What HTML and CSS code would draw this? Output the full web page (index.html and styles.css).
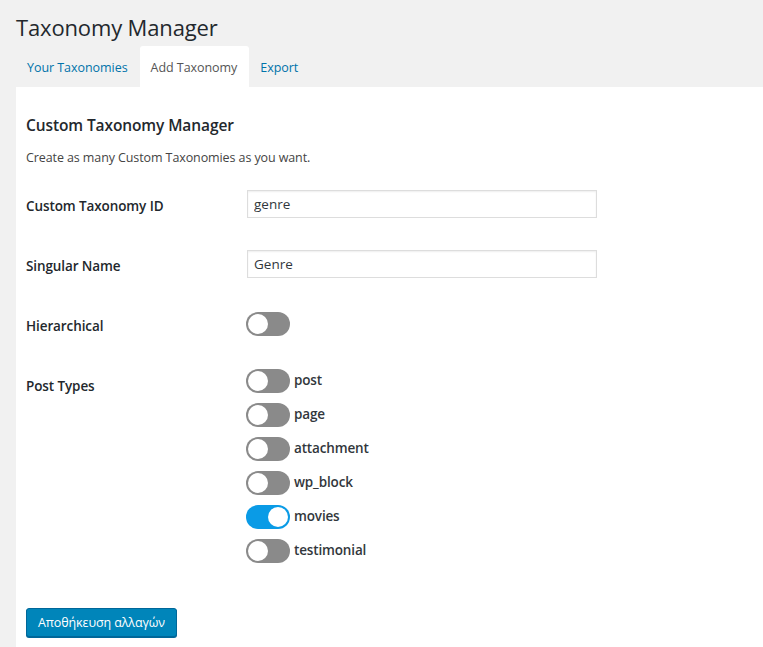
FILE: index.html
```html
<!DOCTYPE html>
<html lang="en">
<head>
<meta charset="utf-8">
<title>Taxonomy Manager</title>
<link rel="stylesheet" href="styles.css">
</head>
<body>
<div class="wrap">
  <h1 class="page-title">Taxonomy Manager</h1>
  <nav class="tabs">
    <a class="tab">Your Taxonomies</a>
    <a class="tab tab-active">Add Taxonomy</a>
    <a class="tab">Export</a>
  </nav>
  <div class="panel">
    <h2 class="panel-title">Custom Taxonomy Manager</h2>
    <p class="panel-desc">Create as many Custom Taxonomies as you want.</p>
    <div class="form">
      <div class="row row-input">
        <label class="row-label">Custom Taxonomy ID</label>
        <input class="text-input" type="text" value="genre">
      </div>
      <div class="row row-input">
        <label class="row-label">Singular Name</label>
        <input class="text-input" type="text" value="Genre">
      </div>
      <div class="row row-toggle">
        <label class="row-label">Hierarchical</label>
        <span class="switch"><span class="knob"></span></span>
      </div>
      <div class="row row-types">
        <label class="row-label label-top">Post Types</label>
        <div class="types">
          <div class="type"><span class="switch"><span class="knob"></span></span><span class="type-name">post</span></div>
          <div class="type"><span class="switch"><span class="knob"></span></span><span class="type-name">page</span></div>
          <div class="type"><span class="switch"><span class="knob"></span></span><span class="type-name">attachment</span></div>
          <div class="type"><span class="switch"><span class="knob"></span></span><span class="type-name">wp_block</span></div>
          <div class="type"><span class="switch switch-on"><span class="knob"></span></span><span class="type-name">movies</span></div>
          <div class="type"><span class="switch"><span class="knob"></span></span><span class="type-name">testimonial</span></div>
        </div>
      </div>
    </div>
    <button class="btn-primary" type="button">Αποθήκευση αλλαγών</button>
  </div>
</div>
</body>
</html>
```
FILE: styles.css
```css
* { box-sizing: border-box; }
html, body {
  margin: 0;
  padding: 0;
  background: #f1f1f1;
  font-family: "Open Sans", "Noto Sans", sans-serif;
  color: #444;
  font-size: 13px;
}
.wrap {
  padding-left: 16px;
  min-height: 647px;
  display: flex;
  flex-direction: column;
}
.page-title {
  margin: 0;
  padding-top: 13px;
  font-size: 22px;
  line-height: 29px;
  font-weight: 400;
  color: #23282d;
  letter-spacing: -0.15px;
}
.tabs {
  display: flex;
  margin-top: 4px;
  height: 41px;
}
.tab {
  display: flex;
  align-items: center;
  padding: 2px 11px 0;
  color: #0073aa;
  font-size: 12.5px;
  border-radius: 3px 3px 0 0;
  letter-spacing: -0.05px;
}
.tab:first-child { margin-right: 1px; }
.tab-active {
  background: #fff;
  color: #555;
  padding: 2px 12px 0 11px;
}
.panel {
  flex: 1;
  background: #fff;
  padding: 20px 10px 10px;
}
.panel-title {
  margin: 0;
  font-size: 15.5px;
  line-height: 36px;
  font-weight: 600;
  color: #23282d;
  letter-spacing: -0.1px;
}
.panel-desc {
  margin: 6px 0 0;
  font-size: 12.5px;
  line-height: 18px;
  color: #444;
  letter-spacing: -0.1px;
}
.form {
  display: flex;
  flex-direction: column;
  margin-top: 23px;
}
.row {
  display: flex;
  align-items: center;
}
.row-label {
  width: 221px;
  flex: none;
  padding-top: 3px;
  font-size: 13.5px;
  font-weight: 600;
  color: #23282d;
  letter-spacing: -0.1px;
}
.row-input + .row-input { margin-top: 32px; }
.row-toggle { margin-top: 34px; }
.row-types { margin-top: 33px; align-items: flex-start; }
.row-label.label-top { padding-top: 8px; }
.text-input {
  width: 350px;
  height: 28px;
  border: 1px solid #ddd;
  box-shadow: inset 0 1px 2px rgba(0,0,0,0.07);
  padding: 0 6px;
  font-family: inherit;
  font-size: 13.5px;
  color: #32373c;
  margin: 0;
}
.switch {
  width: 44px;
  height: 24px;
  border-radius: 12px;
  background: #8a8a8a;
  padding: 2px;
  display: flex;
  flex: none;
  margin-left: -1px;
}
.knob {
  width: 20px;
  height: 20px;
  border-radius: 50%;
  background: #fff;
}
.switch-on { background: #0a9be6; justify-content: flex-end; }
.types {
  display: flex;
  flex-direction: column;
  gap: 10px;
}
.type {
  display: flex;
  align-items: center;
}
.type-name {
  margin-left: 4px;
  font-size: 13.5px;
  font-weight: 600;
  color: #32373c;
  letter-spacing: -0.15px;
  position: relative;
  top: -1px;
}
.btn-primary {
  margin-top: 45px;
  align-self: flex-start;
  background: #0085ba;
  border: 1px solid #006799;
  border-radius: 3px;
  color: #fff;
  font-family: inherit;
  font-size: 12.5px;
  height: 29px;
  padding: 0 11px 1px;
  box-shadow: 0 1px 0 #006799;
  letter-spacing: -0.1px;
}
```
